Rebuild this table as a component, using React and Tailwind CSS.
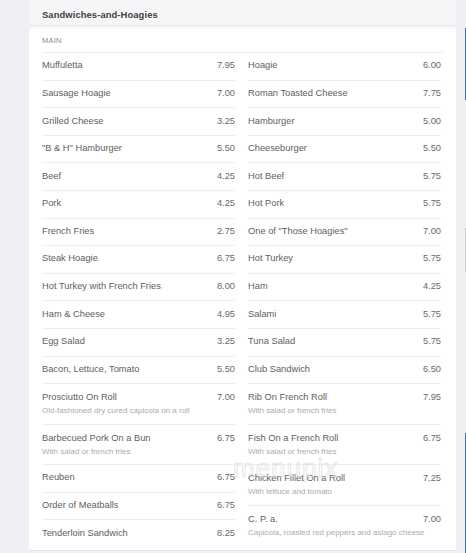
import React from "react";

const left = [
  ["Muffuletta", "7.95"],
  ["Sausage Hoagie", "7.00"],
  ["Grilled Cheese", "3.25"],
  ['"B & H" Hamburger', "5.50"],
  ["Beef", "4.25"],
  ["Pork", "4.25"],
  ["French Fries", "2.75"],
  ["Steak Hoagie", "6.75"],
  ["Hot Turkey with French Fries", "8.00"],
  ["Ham & Cheese", "4.95"],
  ["Egg Salad", "3.25"],
  ["Bacon, Lettuce, Tomato", "5.50"],
  ["Prosciutto On Roll", "7.00", "Old-fashioned dry cured capicola on a roll"],
  ["Barbecued Pork On a Bun", "6.75", "With salad or french fries"],
  ["Reuben", "6.75"],
  ["Order of Meatballs", "6.75"],
  ["Tenderloin Sandwich", "8.25"],
];

const right = [
  ["Hoagie", "6.00"],
  ["Roman Toasted Cheese", "7.75"],
  ["Hamburger", "5.00"],
  ["Cheeseburger", "5.50"],
  ["Hot Beef", "5.75"],
  ["Hot Pork", "5.75"],
  ['One of "Those Hoagies"', "7.00"],
  ["Hot Turkey", "5.75"],
  ["Ham", "4.25"],
  ["Salami", "5.75"],
  ["Tuna Salad", "5.75"],
  ["Club Sandwich", "6.50"],
  ["Rib On French Roll", "7.95", "With salad or french fries"],
  ["Fish On a French Roll", "6.75", "With salad or french fries"],
  ["Chicken Fillet On a Roll", "7.25", "With lettuce and tomato"],
  ["C. P. a.", "7.00", "Capicola, roasted red peppers and asiago cheese"],
];

function Row({ item, last }) {
  const [name, price, desc] = item;
  const border = last ? "" : "border-b border-[#ededf0]";
  if (desc) {
    return (
      <div className={`pt-[6px] pb-[6.5px] ${border}`}>
        <div className="flex justify-between leading-[14px] text-[9.3px] text-[#606060]">
          <span>{name}</span>
          <span className="text-[#6a6a6a]">{price}</span>
        </div>
        <div className="leading-[13px] text-[8px] text-[#ababab] whitespace-nowrap">{desc}</div>
      </div>
    );
  }
  return (
    <div className={`h-[27.6px] flex items-center justify-between text-[9.3px] text-[#606060] ${border}`}>
      <span>{name}</span>
      <span className="text-[#6a6a6a]">{price}</span>
    </div>
  );
}

export default function App() {
  return (
    <div
      className="w-[466px] h-[553px] overflow-hidden bg-[#eff0f4] flex"
      style={{ fontFamily: '"Liberation Sans", Arial, sans-serif' }}
    >
      <div className="ml-[29px] w-[427px] flex flex-col">
        <div className="h-[26px] bg-[#f6f6f8] border-b border-[#e8e8ec] flex items-center px-[13px] pt-[5px]">
          <span className="text-[9.4px] font-bold text-[#404040] tracking-[0.1px]">
            Sandwiches-and-Hoagies
          </span>
        </div>
        <div className="h-[3px] bg-[#f6f6f8]" />
        <div className="bg-white px-[13px] relative border-b border-[#e6e6ea]">
          <div className="h-[24px] flex items-center border-b border-[#ededf0]">
            <span className="text-[7.5px] text-[#8a8a8a] tracking-[0.2px]">MAIN</span>
          </div>
          <div className="flex gap-[13px]">
            <div className="w-[193px] flex flex-col">
              {left.map((it, i) => (
                <Row key={i} item={it} last={i === left.length - 1} />
              ))}
            </div>
            <div className="w-[193px] flex flex-col">
              {right.map((it, i) => (
                <Row key={i} item={it} last={i === right.length - 1} />
              ))}
            </div>
          </div>
          <div className="h-[2px]" />
          <div className="absolute left-[204px] top-[426px] text-[26px] leading-none text-transparent [-webkit-text-stroke:0.6px_#d8d8d8] tracking-[1px] pointer-events-none select-none">
            menupix
          </div>
        </div>
      </div>
      <div className="ml-[9px] w-[1px] flex flex-col">
        <div className="h-[28px]" />
        <div className="h-[72px] bg-[#3f6fb5]" />
        <div className="h-[128px]" />
        <div className="h-[44px] bg-[#c9ccd4]" />
        <div className="h-[161px]" />
        <div className="flex-1 bg-[#3f6fb5]" />
      </div>
    </div>
  );
}
